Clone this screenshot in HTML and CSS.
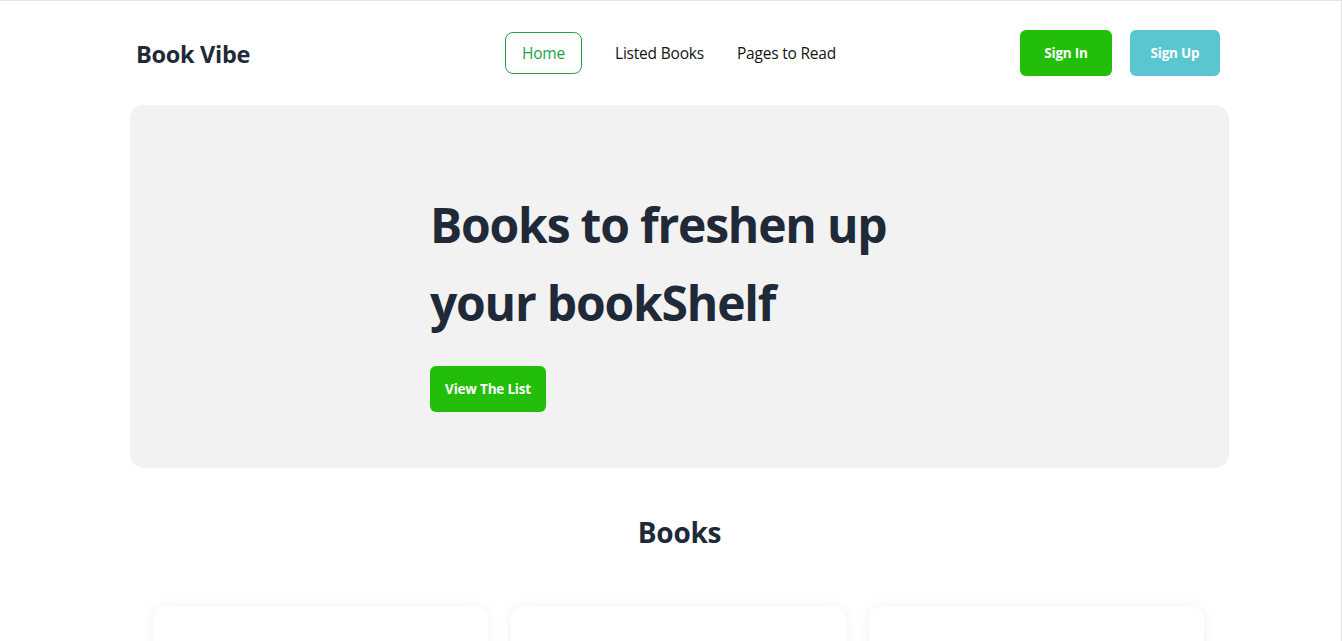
FILE: index.html
```html
<!DOCTYPE html>
<html lang="en">
<head>
<meta charset="utf-8">
<title>Book Vibe</title>
<link rel="stylesheet" href="styles.css">
</head>
<body>
<div class="frame">
  <div class="container">
    <header class="navbar">
      <a class="brand" href="#">Book Vibe</a>
      <nav class="nav-links">
        <a class="nav-link active" href="#">Home</a>
        <a class="nav-link" href="#">Listed Books</a>
        <a class="nav-link" href="#">Pages to Read</a>
      </nav>
      <div class="nav-actions">
        <a class="btn btn-green" href="#">Sign In</a>
        <a class="btn btn-cyan" href="#">Sign Up</a>
      </div>
    </header>

    <section class="hero">
      <div class="hero-content">
        <h1 class="hero-title">Books to freshen up<br>your bookShelf</h1>
        <a class="btn btn-green btn-hero" href="#">View The List</a>
      </div>
    </section>

    <h2 class="section-title">Books</h2>

    <div class="book-grid">
      <div class="book-card"></div>
      <div class="book-card"></div>
      <div class="book-card"></div>
    </div>
  </div>
</div>
</body>
</html>
```

FILE: styles.css
```css
* { box-sizing: border-box; }
html, body { margin: 0; padding: 0; }
body {
  font-family: "Open Sans", "Noto Sans", sans-serif;
  color: #1f2937;
  background: #ffffff;
  overflow: hidden;
}
a { text-decoration: none; color: inherit; }

.frame {
  height: 641px;
  overflow: hidden;
  border-top: 1px solid #e3e3e3;
  border-right: 1px solid #e3e3e3;
}

.container {
  width: 1099px;
  margin-left: 130px;
}

.navbar {
  display: flex;
  align-items: center;
  height: 104px;
  padding: 0 9px 0 6px;
}
.brand {
  font-size: 23.5px;
  font-weight: 700;
  letter-spacing: -0.3px;
  color: #1f2937;
  width: 369px;
  margin-top: 2px;
}
.nav-links {
  display: flex;
  align-items: center;
  gap: 33px;
  flex: 1;
}
.nav-link {
  font-size: 15.5px;
  color: #131313;
  letter-spacing: -0.2px;
}
.nav-link.active {
  color: #23a24a;
  border: 1px solid #23a24a;
  border-radius: 8px;
  height: 42px;
  width: 77px;
  justify-content: center;
  display: flex;
  align-items: center;
}
.nav-actions {
  display: flex;
  gap: 18px;
}
.btn {
  display: inline-flex;
  align-items: center;
  justify-content: center;
  height: 46px;
  border-radius: 6px;
  font-size: 13.5px;
  font-weight: 700;
  color: #ffffff;
  letter-spacing: -0.2px;
}
.btn-green { background: #23be0a; width: 92px; }
.btn-cyan { background: #59c6d2; width: 90px; }

.hero {
  background: #f2f2f2;
  border-radius: 14px;
  height: 363px;
  padding: 81px 0 0 300px;
}
.hero-title {
  margin: 0;
  font-size: 48px;
  line-height: 78px;
  font-weight: 700;
  letter-spacing: -1.2px;
  color: #1f2937;
}
.btn-hero {
  width: 116px;
  margin-top: 24px;
}

.section-title {
  margin: 44px 0 0;
  text-align: center;
  font-size: 28px;
  font-weight: 700;
  letter-spacing: -0.3px;
  color: #1f2937;
  line-height: 40px;
}

.book-grid {
  display: grid;
  grid-template-columns: repeat(3, 335px);
  gap: 23px;
  padding: 0 23px;
  margin-top: 54px;
}
.book-card {
  height: 300px;
  background: #ffffff;
  border-radius: 14px;
  box-shadow: 0 0 14px rgba(0, 0, 0, 0.06);
}
```
